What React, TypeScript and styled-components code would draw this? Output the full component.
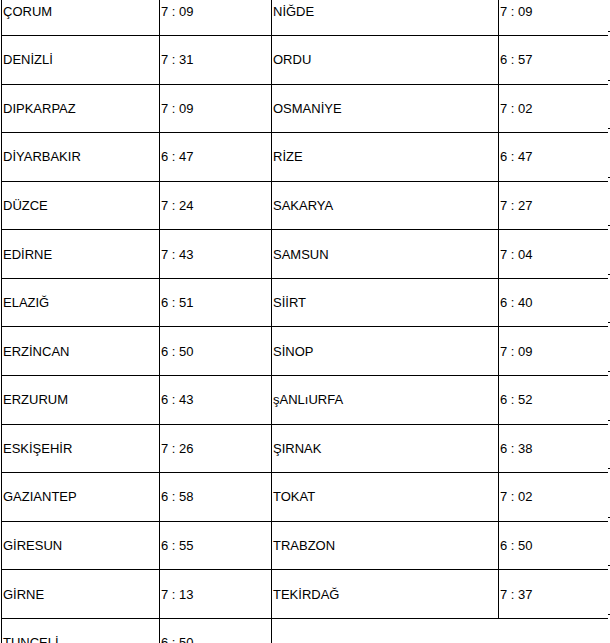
import React from 'react';
import styled, { createGlobalStyle } from 'styled-components';

type Row = [string, string];

const leftRows: Row[] = [
  ['ÇORUM', '7 : 09'],
  ['DENİZLİ', '7 : 31'],
  ['DIPKARPAZ', '7 : 09'],
  ['DİYARBAKIR', '6 : 47'],
  ['DÜZCE', '7 : 24'],
  ['EDİRNE', '7 : 43'],
  ['ELAZIĞ', '6 : 51'],
  ['ERZİNCAN', '6 : 50'],
  ['ERZURUM', '6 : 43'],
  ['ESKİŞEHİR', '7 : 26'],
  ['GAZIANTEP', '6 : 58'],
  ['GİRESUN', '6 : 55'],
  ['GİRNE', '7 : 13'],
  ['TUNCELİ', '6 : 50'],
];

const rightRows: Row[] = [
  ['NİĞDE', '7 : 09'],
  ['ORDU', '6 : 57'],
  ['OSMANİYE', '7 : 02'],
  ['RİZE', '6 : 47'],
  ['SAKARYA', '7 : 27'],
  ['SAMSUN', '7 : 04'],
  ['SİİRT', '6 : 40'],
  ['SİNOP', '7 : 09'],
  ['şANLıURFA', '6 : 52'],
  ['ŞIRNAK', '6 : 38'],
  ['TOKAT', '7 : 02'],
  ['TRABZON', '6 : 50'],
  ['TEKİRDAĞ', '7 : 37'],
];

const App: React.FC = () => {
  return (
    <>
      <GlobalStyle />
      <Grid>
        {leftRows.map((left, i) => {
          const right = rightRows[i];
          return (
            <React.Fragment key={left[0]}>
              <Cell>{left[0]}</Cell>
              <Cell>{left[1]}</Cell>
              {right ? (
                <>
                  <Cell>{right[0]}</Cell>
                  <Cell>{right[1]}</Cell>
                  <Tick />
                </>
              ) : (
                <Empty />
              )}
            </React.Fragment>
          );
        })}
      </Grid>
    </>
  );
};

const GlobalStyle = createGlobalStyle`
  html, body {
    margin: 0;
    padding: 0;
    background: #fff;
    overflow: hidden;
  }
`;

/* sayfa biraz kaydırılmış gibi, ilk satırın üstü görünmüyor */
const Grid = styled.div`
  display: grid;
  grid-template-columns: 158px 112px 227px 110px 2px;
  grid-auto-rows: 48.583px;
  margin-top: -12.58px;
  margin-left: 1px;
  font-family: 'Liberation Sans', Arial, sans-serif;
  font-size: 13px;
  color: #000;
`;

const Cell = styled.div`
  display: flex;
  align-items: center;
  padding-left: 1px;
  border-left: 1px solid #000;
  border-bottom: 1px solid #000;
  white-space: nowrap;
`;

const Empty = styled.div`
  grid-column: 3 / span 3;
  border-left: 1px solid #000;
`;

const Tick = styled.div`
  align-self: end;
  height: 1px;
  margin-bottom: 4px;
  background: #000;
`;

export default App;
